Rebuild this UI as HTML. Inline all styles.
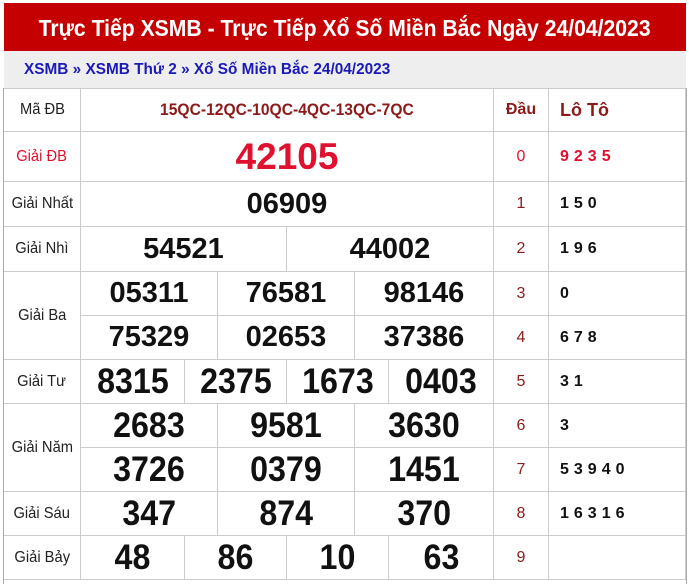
<!DOCTYPE html>
<html><head><meta charset="utf-8"><style>
*{margin:0;padding:0;box-sizing:border-box}
body{width:689px;height:584px;background:#fff;font-family:"Liberation Sans",sans-serif;position:relative;overflow:hidden}
.t{position:absolute;left:4px;top:3px;width:682px;height:48px;background:#c40000;color:#fff;font-weight:bold;font-size:23px;text-align:center;line-height:50px;white-space:nowrap}
.t span{display:inline-block;transform:scaleX(0.92)}
.bc{position:absolute;left:4px;top:51px;width:682px;height:37px;background:#eee;color:#1a1ab8;font-size:16px;font-weight:bold;line-height:38px;padding-left:20px;white-space:nowrap}
.bc span{display:inline-block;transform:scaleX(0.96);transform-origin:left}
.c{position:absolute;border-right:1px solid #ccc;border-bottom:1px solid #ccc;display:flex;align-items:center;justify-content:center;white-space:nowrap}
.l{font-size:16px;color:#222}
.l span{display:inline-block;transform:scaleX(0.92)}
.n{font-size:29px;font-weight:bold;color:#111}
.nc{font-size:35px;font-weight:bold;color:#111}
.nc span{display:inline-block;transform:scaleX(0.92)}
.d{font-size:16px;color:#8b1a1a}
.lt{justify-content:flex-start;padding-left:11px;font-size:16px;font-weight:bold;color:#111;letter-spacing:5px}
.frame{position:absolute;left:3px;top:88px;width:684px;height:496px;border-left:1px solid #aaa;border-right:1px solid #aaa}
</style></head><body>
<div class="t"><span>Trực Tiếp XSMB - Trực Tiếp Xổ Số Miền Bắc Ngày 24/04/2023</span></div>
<div class="bc"><span>XSMB » XSMB Thứ 2 » Xổ Số Miền Bắc 24/04/2023</span></div>
<div class="frame"></div>
<div class="c l" style="left:4px;top:88px;width:77px;height:44px;border-top:1px solid #ccc"><span>Mã ĐB</span></div>
<div class="c" style="left:81px;top:88px;width:413px;height:44px;border-top:1px solid #ccc;color:#8b1a1a;font-size:17px;font-weight:bold"><span style="display:inline-block;transform:scaleX(0.92)">15QC-12QC-10QC-4QC-13QC-7QC</span></div>
<div class="c" style="left:494px;top:88px;width:55px;height:44px;border-top:1px solid #ccc;color:#8b1a1a;font-size:16px;font-weight:bold">Đầu</div>
<div class="c lt" style="left:549px;top:88px;width:137px;height:44px;border-top:1px solid #ccc;color:#8b1a1a;font-size:18px;letter-spacing:0">Lô Tô</div>
<div class="c l" style="left:4px;top:132px;width:77px;height:50px;color:#e0102f"><span>Giải ĐB</span></div>
<div class="c" style="left:81px;top:132px;width:413px;height:50px;color:#e0102f;font-size:37px;font-weight:bold">42105</div>
<div class="c d" style="left:494px;top:132px;width:55px;height:50px;color:#e0102f">0</div>
<div class="c lt" style="left:549px;top:132px;width:137px;height:50px;color:#e0102f">9235</div>
<div class="c l" style="left:4px;top:182px;width:77px;height:45px"><span>Giải Nhất</span></div>
<div class="c n" style="left:81px;top:182px;width:413px;height:45px">06909</div>
<div class="c d" style="left:494px;top:182px;width:55px;height:45px">1</div>
<div class="c lt" style="left:549px;top:182px;width:137px;height:45px">150</div>
<div class="c l" style="left:4px;top:227px;width:77px;height:45px"><span>Giải Nhì</span></div>
<div class="c n" style="left:81px;top:227px;width:206px;height:45px">54521</div>
<div class="c n" style="left:287px;top:227px;width:207px;height:45px">44002</div>
<div class="c d" style="left:494px;top:227px;width:55px;height:45px">2</div>
<div class="c lt" style="left:549px;top:227px;width:137px;height:45px">196</div>
<div class="c l" style="left:4px;top:272px;width:77px;height:88px"><span>Giải Ba</span></div>
<div class="c n" style="left:81px;top:272px;width:137px;height:44px">05311</div>
<div class="c n" style="left:218px;top:272px;width:137px;height:44px">76581</div>
<div class="c n" style="left:355px;top:272px;width:139px;height:44px">98146</div>
<div class="c n" style="left:81px;top:316px;width:137px;height:44px">75329</div>
<div class="c n" style="left:218px;top:316px;width:137px;height:44px">02653</div>
<div class="c n" style="left:355px;top:316px;width:139px;height:44px">37386</div>
<div class="c d" style="left:494px;top:272px;width:55px;height:44px">3</div>
<div class="c lt" style="left:549px;top:272px;width:137px;height:44px">0</div>
<div class="c d" style="left:494px;top:316px;width:55px;height:44px">4</div>
<div class="c lt" style="left:549px;top:316px;width:137px;height:44px">678</div>
<div class="c l" style="left:4px;top:360px;width:77px;height:44px"><span>Giải Tư</span></div>
<div class="c nc" style="left:81px;top:360px;width:104px;height:44px"><span>8315</span></div>
<div class="c nc" style="left:185px;top:360px;width:102px;height:44px"><span>2375</span></div>
<div class="c nc" style="left:287px;top:360px;width:102px;height:44px"><span>1673</span></div>
<div class="c nc" style="left:389px;top:360px;width:105px;height:44px"><span>0403</span></div>
<div class="c d" style="left:494px;top:360px;width:55px;height:44px">5</div>
<div class="c lt" style="left:549px;top:360px;width:137px;height:44px">31</div>
<div class="c l" style="left:4px;top:404px;width:77px;height:88px"><span>Giải Năm</span></div>
<div class="c nc" style="left:81px;top:404px;width:137px;height:44px"><span>2683</span></div>
<div class="c nc" style="left:218px;top:404px;width:137px;height:44px"><span>9581</span></div>
<div class="c nc" style="left:355px;top:404px;width:139px;height:44px"><span>3630</span></div>
<div class="c nc" style="left:81px;top:448px;width:137px;height:44px"><span>3726</span></div>
<div class="c nc" style="left:218px;top:448px;width:137px;height:44px"><span>0379</span></div>
<div class="c nc" style="left:355px;top:448px;width:139px;height:44px"><span>1451</span></div>
<div class="c d" style="left:494px;top:404px;width:55px;height:44px">6</div>
<div class="c lt" style="left:549px;top:404px;width:137px;height:44px">3</div>
<div class="c d" style="left:494px;top:448px;width:55px;height:44px">7</div>
<div class="c lt" style="left:549px;top:448px;width:137px;height:44px">53940</div>
<div class="c l" style="left:4px;top:492px;width:77px;height:44px"><span>Giải Sáu</span></div>
<div class="c nc" style="left:81px;top:492px;width:137px;height:44px"><span>347</span></div>
<div class="c nc" style="left:218px;top:492px;width:137px;height:44px"><span>874</span></div>
<div class="c nc" style="left:355px;top:492px;width:139px;height:44px"><span>370</span></div>
<div class="c d" style="left:494px;top:492px;width:55px;height:44px">8</div>
<div class="c lt" style="left:549px;top:492px;width:137px;height:44px">16316</div>
<div class="c l" style="left:4px;top:536px;width:77px;height:44px"><span>Giải Bảy</span></div>
<div class="c nc" style="left:81px;top:536px;width:104px;height:44px"><span>48</span></div>
<div class="c nc" style="left:185px;top:536px;width:102px;height:44px"><span>86</span></div>
<div class="c nc" style="left:287px;top:536px;width:102px;height:44px"><span>10</span></div>
<div class="c nc" style="left:389px;top:536px;width:105px;height:44px"><span>63</span></div>
<div class="c d" style="left:494px;top:536px;width:55px;height:44px">9</div>
<div class="c lt" style="left:549px;top:536px;width:137px;height:44px"></div>
</body></html>
